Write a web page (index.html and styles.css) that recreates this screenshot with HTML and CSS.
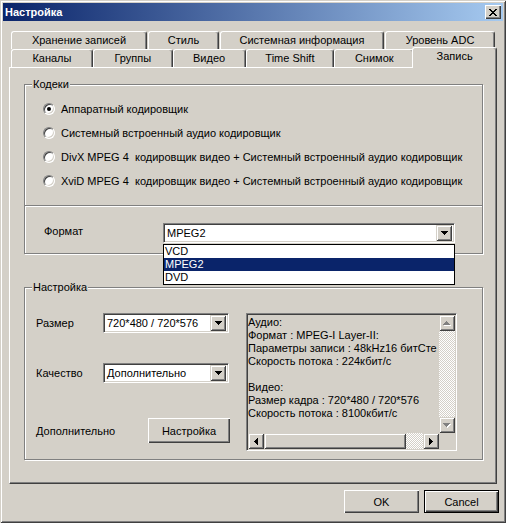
FILE: index.html
```html
<!DOCTYPE html>
<html lang="ru">
<head>
    <meta charset="UTF-8">
    <title>Настройка</title>
    <link rel="stylesheet" href="styles.css">
</head>
<body>
    <div class="window">
        <div class="titlebar">
            <span class="title">Настройка</span>
            <span class="close">
                <svg width="8" height="7" viewBox="0 0 8 7" shape-rendering="crispEdges"><path d="M0 0h2v1h1v1h2v-1h1v-1h2v1h-1v1h-1v1h-1v1h1v1h1v1h1v1h-2v-1h-1v-1h-2v1h-1v1h-2v-1h1v-1h1v-1h1v-1h-1v-1h-1v-1h-1z" fill="#000"/></svg>
            </span>
        </div>

        <div class="tabs">
            <div class="tab-row back">
                <div class="tab t-storage">Хранение записей</div>
                <div class="tab t-style">Стиль</div>
                <div class="tab t-sysinfo">Системная информация</div>
                <div class="tab t-adc">Уровень ADC</div>
            </div>
            <div class="tab-row front">
                <div class="tab t-channels">Каналы</div>
                <div class="tab t-groups">Группы</div>
                <div class="tab t-video">Видео</div>
                <div class="tab t-shift">Time Shift</div>
                <div class="tab t-shot">Снимок</div>
                <div class="tab active">Запись</div>
            </div>

            <div class="panel">
                <div class="group codecs">
                    <span class="legend">Кодеки</span>
                    <div class="radios">
                        <div class="radio"><span class="dot checked"></span>Аппаратный кодировщик</div>
                        <div class="radio"><span class="dot"></span>Системный встроенный аудио кодировщик</div>
                        <div class="radio"><span class="dot"></span>DivX MPEG 4&nbsp; кодировщик видео + Системный встроенный аудио кодировщик</div>
                        <div class="radio"><span class="dot"></span>XviD MPEG 4&nbsp; кодировщик видео + Системный встроенный аудио кодировщик</div>
                    </div>
                    <div class="format-row">
                        <span class="format-label">Формат</span>
                        <div class="combo format-combo">
                            <span class="combo-value">MPEG2</span>
                            <span class="arrow-btn">
                                <svg width="7" height="4" viewBox="0 0 7 4" shape-rendering="crispEdges"><path d="M0 0h7v1h-1v1h-1v1h-1v1h-1v-1h-1v-1h-1v-1h-1z" fill="#000"/></svg>
                            </span>
                            <ul class="dropdown">
                                <li>VCD</li>
                                <li class="selected">MPEG2</li>
                                <li>DVD</li>
                            </ul>
                        </div>
                    </div>
                </div>

                <div class="group settings">
                    <span class="legend">Настройка</span>
                    <div class="fields">
                        <div class="field">
                            <span class="field-label">Размер</span>
                            <div class="combo small">
                                <span class="combo-value">720*480 / 720*576</span>
                                <span class="arrow-btn">
                                    <svg width="7" height="4" viewBox="0 0 7 4" shape-rendering="crispEdges"><path d="M0 0h7v1h-1v1h-1v1h-1v1h-1v-1h-1v-1h-1v-1h-1z" fill="#000"/></svg>
                                </span>
                            </div>
                        </div>
                        <div class="field">
                            <span class="field-label">Качество</span>
                            <div class="combo small">
                                <span class="combo-value">Дополнительно</span>
                                <span class="arrow-btn">
                                    <svg width="7" height="4" viewBox="0 0 7 4" shape-rendering="crispEdges"><path d="M0 0h7v1h-1v1h-1v1h-1v1h-1v-1h-1v-1h-1v-1h-1z" fill="#000"/></svg>
                                </span>
                            </div>
                        </div>
                        <div class="field extra">
                            <span class="field-label">Дополнительно</span>
                            <button class="btn setup">Настройка</button>
                        </div>
                    </div>

                    <div class="memo">
                        <div class="memo-text">Аудио:
Формат : MPEG-I Layer-II:
Параметры записи : 48kHz16 битСте
Скорость потока : 224кбит/с

Видео:
Размер кадра : 720*480 / 720*576
Скорость потока : 8100кбит/с</div>
                        <div class="vscroll">
                            <span class="arrow-btn">
                                <svg width="8" height="5" viewBox="0 0 8 5" shape-rendering="crispEdges"><path d="M4 1h1v1h1v1h1v1h1v1h-7v-1h1v-1h1v-1h1z" fill="#fff"/><path d="M3 0h1v1h1v1h1v1h1v1h-7v-1h1v-1h1v-1h1z" fill="#808080"/></svg>
                            </span>
                            <span class="track"></span>
                            <span class="arrow-btn">
                                <svg width="8" height="5" viewBox="0 0 8 5" shape-rendering="crispEdges"><path d="M1 1h7v1h-1v1h-1v1h-1v1h-1v-1h-1v-1h-1v-1h-1z" fill="#fff"/><path d="M0 0h7v1h-1v1h-1v1h-1v1h-1v-1h-1v-1h-1v-1h-1z" fill="#808080"/></svg>
                            </span>
                        </div>
                        <div class="hscroll">
                            <span class="arrow-btn">
                                <svg width="4" height="7" viewBox="0 0 4 7" shape-rendering="crispEdges"><path d="M3 0h1v7h-1v-1h-1v-1h-1v-1h-1v-1h1v-1h1v-1h1z" fill="#000"/></svg>
                            </span>
                            <span class="thumb"></span>
                            <span class="track"></span>
                            <span class="arrow-btn">
                                <svg width="4" height="7" viewBox="0 0 4 7" shape-rendering="crispEdges"><path d="M0 0h1v1h1v1h1v1h1v1h-1v1h-1v1h-1v1h-1z" fill="#000"/></svg>
                            </span>
                        </div>
                        <div class="corner"></div>
                    </div>
                </div>
            </div>
        </div>

        <div class="footer">
            <button class="btn">OK</button>
            <button class="btn default">Cancel</button>
        </div>
    </div>
</body>
</html>
```

FILE: styles.css
```css
* {
    margin: 0;
    padding: 0;
    box-sizing: border-box;
}
body {
    font: 11px "Liberation Sans", Arial, sans-serif;
    color: #000;
    background: #d4d0c8;
}
.window {
    width: 506px;
    height: 523px;
    padding: 3px;
    display: flex;
    flex-direction: column;
    background: #d4d0c8;
    box-shadow: inset 1px 1px #d4d0c8, inset -1px -1px #404040, inset 2px 2px #fff, inset -2px -2px #808080;
}

/* title */
.titlebar {
    height: 18px;
    display: flex;
    align-items: center;
    justify-content: space-between;
    padding: 0 2px;
    background: linear-gradient(to right, #0a246a, #a6caf0);
    color: #fff;
    font-weight: bold;
}
.close {
    width: 16px;
    height: 14px;
    display: flex;
    align-items: center;
    justify-content: center;
    background: #d4d0c8;
    box-shadow: inset 1px 1px #fff, inset -1px -1px #404040, inset -2px -2px #808080;
}

/* tabs */
.tabs {
    margin: 10px 6px 0;
}
.tab-row {
    display: flex;
    height: 18px;
    padding-left: 2px;
}
.tab {
    height: 18px;
    border: 1px solid;
    border-color: #fff #404040 transparent #fff;
    border-bottom: none;
    border-radius: 3px 3px 0 0;
    box-shadow: inset -1px 0 #808080;
    background: #d4d0c8;
    text-align: center;
    line-height: 17px;
    white-space: nowrap;
}
.back .tab {
    margin-right: 1px;
}
.t-storage { width: 136px; }
.t-style { width: 71px; }
.t-sysinfo { width: 164px; }
.t-adc { width: 110px; }
.t-channels { width: 82px; }
.t-groups { width: 80px; }
.t-video { width: 73px; }
.t-shift { width: 89px; }
.t-shot { width: 80px; }
.tab.active {
    width: 85px;
    height: 21px;
    margin: -2px 0 0 -2px;
    position: relative;
    z-index: 1;
    line-height: 16px;
}

.panel {
    height: 417px;
    border: 1px solid;
    border-color: #fff #404040 #404040 #fff;
    box-shadow: inset -1px -1px #808080;
    padding: 16px 13px 0 14px;
}

/* group boxes */
.group {
    position: relative;
    border: 1px solid #808080;
    box-shadow: inset 1px 1px #fff, 1px 1px #fff;
}
.legend {
    position: absolute;
    top: -7px;
    left: 7px;
    padding: 0 1px;
    line-height: 13px;
    background: #d4d0c8;
}
.radios {
    padding: 12px 0 12px 18px;
    border-bottom: 1px solid #808080;
    box-shadow: 0 1px #fff;
}
.radio {
    display: flex;
    align-items: center;
    height: 24px;
    white-space: nowrap;
}
.dot {
    width: 12px;
    height: 12px;
    margin-right: 6px;
    border-radius: 50%;
    border: 1px solid;
    border-color: #808080 #fff #fff #808080;
    background: #fff;
    box-shadow: inset 1px 1px #404040, inset -1px -1px #d4d0c8;
    display: flex;
    align-items: center;
    justify-content: center;
}
.dot.checked::after {
    content: "";
    width: 4px;
    height: 4px;
    border-radius: 50%;
    background: #000;
}
.format-row {
    display: flex;
    align-items: flex-start;
    padding: 17px 0 10px 19px;
}
.format-label {
    width: 119px;
    margin-top: 2px;
}

/* combo boxes */
.combo {
    display: flex;
    align-items: center;
    height: 20px;
    padding: 2px;
    background: #fff;
    border: 1px solid;
    border-color: #808080 #fff #fff #808080;
    box-shadow: inset 1px 1px #404040, inset -1px -1px #d4d0c8;
}
.combo-value {
    flex: 1;
    padding-left: 1px;
    white-space: nowrap;
}
.format-combo {
    position: relative;
    width: 292px;
}
.combo.small {
    width: 126px;
}
.arrow-btn {
    width: 16px;
    height: 16px;
    flex: none;
    display: flex;
    align-items: center;
    justify-content: center;
    background: #d4d0c8;
    box-shadow: inset 1px 1px #d4d0c8, inset -1px -1px #404040, inset 2px 2px #fff, inset -2px -2px #808080;
}
.dropdown {
    position: absolute;
    top: 20px;
    left: -1px;
    width: 292px;
    list-style: none;
    border: 1px solid #000;
    background: #fff;
    z-index: 2;
}
.dropdown li {
    height: 13px;
    line-height: 13px;
    padding-left: 1px;
}
.dropdown .selected {
    background: #0a246a;
    color: #fff;
}

/* settings */
.settings {
    margin-top: 33px;
    height: 173px;
    display: flex;
    padding: 25px 0 0 11px;
}
.fields {
    width: 194px;
    display: flex;
    flex-direction: column;
}
.field {
    display: flex;
    align-items: center;
    height: 20px;
}
.field + .field {
    margin-top: 30px;
}
.field.extra {
    margin-top: 35px;
    height: 25px;
}
.field-label {
    width: 67px;
    white-space: nowrap;
}
.btn {
    width: 75px;
    height: 23px;
    border: none;
    background: #d4d0c8;
    font: inherit;
    color: #000;
    box-shadow: inset 1px 1px #fff, inset -1px -1px #404040, inset -2px -2px #808080;
}
.btn.setup {
    width: 82px;
    height: 25px;
    margin-left: auto;
}
.btn.default {
    border: 1px solid #000;
}

.memo {
    width: 211px;
    height: 138px;
    margin-left: 16px;
    display: grid;
    grid-template-columns: 1fr 16px;
    grid-template-rows: 1fr 16px;
    background: #d4d0c8;
    border: 1px solid;
    border-color: #808080 #fff #fff #808080;
    box-shadow: inset 1px 1px #404040, inset -1px -1px #d4d0c8;
    padding: 1px;
}
.memo-text {
    overflow: hidden;
    white-space: pre;
    line-height: 13px;
    padding-top: 1px;
    background: #d4d0c8;
}
.vscroll {
    display: flex;
    flex-direction: column;
}
.hscroll {
    display: flex;
}
.track {
    flex: 1;
    background: repeating-conic-gradient(#fff 0 25%, #d4d0c8 0 50%) 0 0 / 2px 2px;
}
.thumb {
    width: 142px;
    background: #d4d0c8;
    box-shadow: inset 1px 1px #d4d0c8, inset -1px -1px #404040, inset 2px 2px #fff, inset -2px -2px #808080;
}
.corner {
    background: #d4d0c8;
}

/* bottom buttons */
.footer {
    display: flex;
    justify-content: flex-end;
    gap: 5px;
    margin-top: 6px;
    padding-right: 4px;
}
```
